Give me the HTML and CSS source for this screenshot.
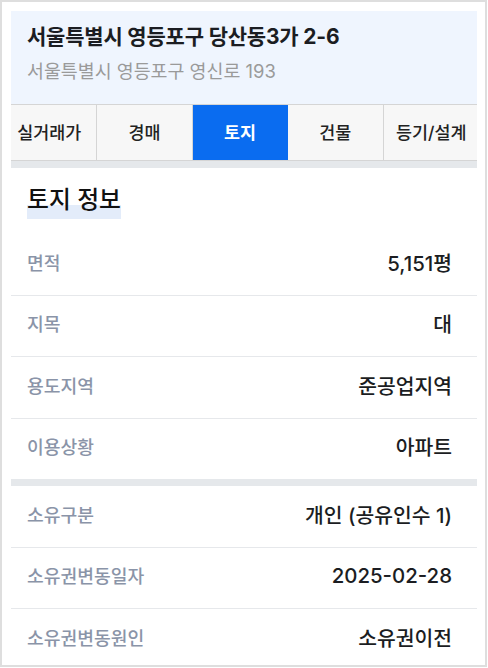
FILE: index.html
```html
<!DOCTYPE html>
<html lang="ko">
<head>
    <meta charset="UTF-8">
    <meta name="viewport" content="width=device-width, initial-scale=1.0">
    <title>토지 정보</title>
    <link rel="stylesheet" href="styles.css">
</head>
<body>
    <div class="frame">
        <div class="panel">
            <div class="addr">
                <div class="addr-title">서울특별시 영등포구 당산동3가 2-6</div>
                <div class="addr-sub">서울특별시 영등포구 영신로 193</div>
            </div>

            <div class="tabs">
                <div class="tab-track">
                    <div class="tab">실거래가</div>
                    <div class="tab">경매</div>
                    <div class="tab active">토지</div>
                    <div class="tab">건물</div>
                    <div class="tab">등기/설계</div>
                </div>
            </div>

            <div class="gap-bar"></div>

            <div class="section-title"><span>토지 정보</span></div>

            <div class="group">
                <div class="row"><span class="label">면적</span><span class="value">5,151평</span></div>
                <div class="row"><span class="label">지목</span><span class="value">대</span></div>
                <div class="row"><span class="label">용도지역</span><span class="value">준공업지역</span></div>
                <div class="row"><span class="label">이용상황</span><span class="value">아파트</span></div>
            </div>

            <div class="gap-bar"></div>

            <div class="group">
                <div class="row"><span class="label">소유구분</span><span class="value">개인 (공유인수 1)</span></div>
                <div class="row"><span class="label">소유권변동일자</span><span class="value">2025-02-28</span></div>
                <div class="row"><span class="label">소유권변동원인</span><span class="value">소유권이전</span></div>
            </div>
        </div>
    </div>
</body>
</html>
```

FILE: styles.css
```css
* {
    box-sizing: border-box;
}
body {
    margin: 0;
    background: #fff;
    font-family: Inter, "Noto Sans CJK KR", sans-serif;
    color: #1a1d23;
}
.frame {
    width: 487px;
    height: 667px;
    border: 2px solid #dedede;
    padding: 9px 8px 0 9px;
    background: #fff;
}
.panel {
    height: 648px;
    overflow: hidden;
    background: #fff;
}
.addr {
    height: 93px;
    padding: 14px 16px 0;
    background: #eff5fe;
}
.addr-title {
    font-size: 21px;
    font-weight: 700;
    line-height: 24px;
    letter-spacing: -0.2px;
    color: #1b1d22;
}
.addr-sub {
    margin-top: 10px;
    font-size: 18.4px;
    line-height: 24px;
    color: #9a9a9a;
}
.tabs {
    height: 57px;
    overflow: hidden;
    border-top: 1px solid #d5d5d5;
    border-bottom: 1px solid #d5d5d5;
    background: #f7f7f7;
}
.tab-track {
    display: flex;
    margin-left: -9px;
}
.tab {
    flex: 0 0 95.4px;
    height: 55px;
    display: flex;
    align-items: center;
    justify-content: center;
    padding-bottom: 3px;
    border-right: 1px solid #d5d5d5;
    font-size: 17.4px;
    font-weight: 500;
    color: #222;
}
.tab:last-child {
    border-right: none;
}
.tab.active {
    background: #0a6cf0;
    color: #fff;
    font-weight: 700;
    border-right-color: #0a6cf0;
}
.gap-bar {
    height: 7px;
    background: #e5e8eb;
}
.section-title {
    height: 66px;
    padding: 17px 16px 0;
}
.section-title span {
    display: inline-block;
    font-size: 23.8px;
    font-weight: 500;
    line-height: 29px;
    padding-bottom: 5px;
    color: #111;
    background: linear-gradient(to bottom, transparent 58%, #e3ecfa 58%);
}
.row {
    height: 61.5px;
    display: flex;
    align-items: center;
    justify-content: space-between;
    padding: 0 25px 5px 16px;
    border-bottom: 1px solid #e6e8eb;
}
.group .row:last-child {
    border-bottom: none;
    height: 60.5px;
}
.label {
    font-size: 18.2px;
    font-weight: 500;
    color: #8a94a8;
}
.value {
    font-size: 20.4px;
    font-weight: 500;
    color: #1b1d22;
}
```
